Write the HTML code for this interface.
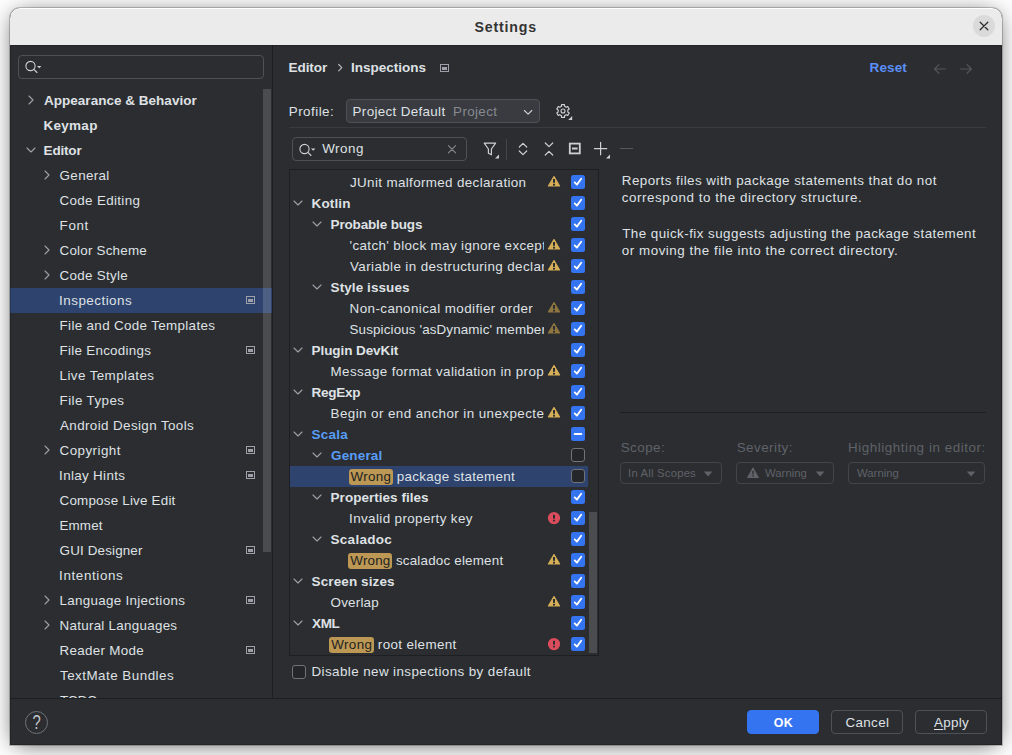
<!DOCTYPE html>
<html><head><meta charset="utf-8"><title>Settings</title>
<style>
html,body{margin:0;padding:0;width:1012px;height:755px;overflow:hidden;background:#fefefe;}
body{font-family:"Liberation Sans",sans-serif;font-size:13.4px;letter-spacing:0.3px;color:#dfe1e5;position:relative;}
.win{position:absolute;left:10px;top:8px;width:992px;height:737px;background:#2b2d30;border-radius:10px 10px 0 0;overflow:hidden;}
.shadow{position:absolute;left:10px;top:8px;width:992px;height:737px;border-radius:10px 10px 0 0;box-shadow:0 0 0 1px rgba(0,0,0,0.2),0 2.8px 23.4px -5.1px rgba(0,0,0,0.73);}
.title{position:absolute;left:0;top:0;width:992px;height:37px;background:#ebebeb;box-shadow:inset 0 1px 0 #fff;border-radius:10px 10px 0 0;}
#title{position:absolute;left:465px;top:1px;line-height:37px;color:#343434;font-weight:bold;font-size:14.2px;letter-spacing:0.45px;white-space:nowrap;}
.close{position:absolute;left:963px;top:7px;width:22px;height:22px;border-radius:50%;background:#dadada;}
.body{position:absolute;left:0;top:37px;width:992px;height:700px;}
.edge{position:absolute;left:0;top:37px;width:992px;height:700px;box-shadow:inset 0 0 0 1px rgba(0,0,0,0.2);pointer-events:none;}
.ic{position:absolute;display:block;overflow:visible;}
.b{font-weight:bold;letter-spacing:0.1px;font-size:13.5px;}
.sbt{position:absolute;height:25px;line-height:26px;white-space:nowrap;}
.sbsel{position:absolute;left:0;width:262px;height:25px;background:#2e436e;}
.trt{position:absolute;height:21px;line-height:21px;white-space:nowrap;overflow:hidden;padding-left:4px;}
.trsel{position:absolute;left:0;width:298px;height:21px;background:#2e436e;}
.blue{color:#589df6;}
.hl{background:#bd9854;color:#1e1f22;border-radius:3px;padding:0 1.5px 1px 1.8px;margin:0 0 0 -1.8px;}
.abs{position:absolute;white-space:nowrap;line-height:22px;}
.box{position:absolute;box-sizing:border-box;border:1px solid #4e5157;border-radius:4px;}
.dis{color:#5f6269;}
.sm{font-size:11.3px;letter-spacing:0.2px;}
.btn{position:absolute;box-sizing:border-box;height:24px;top:665px;border:1px solid #4e5157;border-radius:4px;}
.desc{position:absolute;white-space:nowrap;line-height:17px;left:612px;}
#h_editor{letter-spacing:-0.07px;margin-left:-0.45px}
#h_insp{letter-spacing:0.01px}
#h_reset{letter-spacing:0.13px;margin-left:-0.48px}
#p_label{letter-spacing:0.47px;margin-left:-0.25px}
#p_def{letter-spacing:0.34px;margin-left:-0.45px}
#p_proj{letter-spacing:0.36px;margin-left:-0.90px}
#s_wrong{letter-spacing:0.53px;margin-left:0.15px}
#d1{letter-spacing:0.46px;margin-left:-0.25px}
#d2{letter-spacing:0.57px;margin-left:-0.25px}
#d3{letter-spacing:0.45px;margin-left:0.15px}
#d4{letter-spacing:0.53px;margin-left:-0.25px}
#l_scope{letter-spacing:0.46px;margin-left:-0.32px}
#l_sev{letter-spacing:0.46px;margin-left:-0.32px}
#l_hl{letter-spacing:0.55px;margin-left:-0.96px}
#c_scope{letter-spacing:0.20px;margin-left:-0.96px}
#c_sev{letter-spacing:0.02px;margin-left:0.06px}
#c_hl{letter-spacing:0.02px;margin-left:0.06px}
#b_cancel{letter-spacing:0.33px;margin-left:-0.45px}
#b_apply{letter-spacing:0.30px}
#title{letter-spacing:0.79px;margin-left:-0.43px}
#dis{letter-spacing:0.41px;margin-left:-0.49px}
#sb0{letter-spacing:0.02px}
#sb1{letter-spacing:0.26px;margin-left:-0.45px}
#sb2{letter-spacing:-0.18px;margin-left:-0.45px}
#sb3{letter-spacing:0.35px;margin-left:-0.45px}
#sb4{letter-spacing:0.33px;margin-left:-0.45px}
#sb5{letter-spacing:0.65px;margin-left:-0.45px}
#sb6{letter-spacing:0.21px;margin-left:-0.45px}
#sb7{letter-spacing:0.28px;margin-left:-0.45px}
#sb8{letter-spacing:0.48px;margin-left:-0.90px}
#sb9{letter-spacing:0.34px;margin-left:-0.45px}
#sb10{letter-spacing:0.27px;margin-left:-0.45px}
#sb11{letter-spacing:0.41px;margin-left:-0.45px}
#sb12{letter-spacing:0.40px;margin-left:-0.45px}
#sb13{letter-spacing:0.39px}
#sb14{letter-spacing:0.45px;margin-left:-0.45px}
#sb15{letter-spacing:0.33px;margin-left:-0.90px}
#sb16{letter-spacing:0.21px;margin-left:-0.45px}
#sb17{letter-spacing:0.11px;margin-left:-0.45px}
#sb18{letter-spacing:0.16px;margin-left:-0.45px}
#sb19{letter-spacing:0.62px;margin-left:-0.90px}
#sb20{letter-spacing:0.30px;margin-left:-0.45px}
#sb21{letter-spacing:0.27px;margin-left:-0.45px}
#sb22{letter-spacing:0.31px;margin-left:-0.45px}
#sb23{letter-spacing:0.48px}
#sb24{letter-spacing:-0.30px}
#tr0{letter-spacing:0.36px}
#tr1{letter-spacing:0.14px;margin-left:-0.45px}
#tr2{letter-spacing:-0.16px;margin-left:-0.45px}
#tr5{letter-spacing:0.08px;margin-left:-0.45px}
#tr6{letter-spacing:0.42px;margin-left:-0.45px}
#tr8{letter-spacing:-0.08px;margin-left:-0.45px}
#tr10{letter-spacing:-0.28px;margin-left:-0.45px}
#tr12{letter-spacing:0.21px;margin-left:-0.45px}
#tr13{letter-spacing:0.17px}
#tr14{letter-spacing:0.30px;margin-left:0.44px}
#tr15{letter-spacing:0.03px;margin-left:-0.45px}
#tr16{letter-spacing:0.38px;margin-left:-0.90px}
#tr17{letter-spacing:0.27px;margin-left:-0.45px}
#tr18{letter-spacing:0.20px;margin-left:0.29px}
#tr19{letter-spacing:0.11px;margin-left:-0.45px}
#tr20{letter-spacing:0.20px;margin-left:-0.45px}
#tr21{letter-spacing:-0.33px}
#tr22{letter-spacing:0.36px;margin-left:0.29px}
#h_ins{letter-spacing:3.38px;margin-left:-14.78px}
#tr3{letter-spacing:0.37px;margin-left:-0.45px}
#tr4{letter-spacing:0.39px}
#tr7{letter-spacing:0.13px;margin-left:-0.45px}
#tr9{letter-spacing:0.38px;margin-left:-0.45px}
#tr11{letter-spacing:0.42px;margin-left:-0.45px}
#b_ok{letter-spacing:0.40px;margin-left:-0.25px}
</style></head>
<body>
<div class="shadow"></div>
<div class="win">
 <div class="title"></div>
 <div id="title">Settings</div>
 <div class="close"><svg class="ic" style="left:5px;top:5px" width="12" height="12" viewBox="0 0 12 12"><path d="M2.2 2.2 L9.8 9.8 M9.8 2.2 L2.2 9.8" stroke="#2e2e2e" stroke-width="1.3" stroke-linecap="round" fill="none"/></svg></div>
 <div class="body">
  <!-- sidebar -->
  <div style="position:absolute;left:0;top:0;width:262px;height:653px;overflow:hidden;">
   <div class="box" style="left:8px;top:10px;width:246px;height:24px;"></div>
   <svg class="ic" style="left:13.5px;top:14px" width="20" height="16" viewBox="0 0 20 16"><circle cx="6.5" cy="7" r="4.6" fill="none" stroke="#ced0d6" stroke-width="1.1"/><path d="M9.9 10.4 L13 13.5" stroke="#ced0d6" stroke-width="1.1" stroke-linecap="round"/><path d="M13 7 H17.4 L15.2 9.3 Z" fill="#ced0d6"/></svg>
<svg class="ic" style="left:12.5px;top:47px" width="16" height="16" viewBox="0 0 16 16"><path d="M6 4 L10 8 L6 12" fill="none" stroke="#9da0a8" stroke-width="1.1" stroke-linecap="round" stroke-linejoin="round"/></svg>
<div id="sb0" class="sbt b" style="left:34px;top:43px">Appearance &amp; Behavior</div>
<div id="sb1" class="sbt b" style="left:34px;top:68px">Keymap</div>
<svg class="ic" style="left:13.2px;top:97px" width="16" height="16" viewBox="0 0 16 16"><path d="M4 6 L8 10 L12 6" fill="none" stroke="#9da0a8" stroke-width="1.1" stroke-linecap="round" stroke-linejoin="round"/></svg>
<div id="sb2" class="sbt b" style="left:34px;top:93px">Editor</div>
<svg class="ic" style="left:28.5px;top:122px" width="16" height="16" viewBox="0 0 16 16"><path d="M6 4 L10 8 L6 12" fill="none" stroke="#9da0a8" stroke-width="1.1" stroke-linecap="round" stroke-linejoin="round"/></svg>
<div id="sb3" class="sbt" style="left:50px;top:118px">General</div>
<div id="sb4" class="sbt" style="left:50px;top:143px">Code Editing</div>
<div id="sb5" class="sbt" style="left:50px;top:168px">Font</div>
<svg class="ic" style="left:28.5px;top:197px" width="16" height="16" viewBox="0 0 16 16"><path d="M6 4 L10 8 L6 12" fill="none" stroke="#9da0a8" stroke-width="1.1" stroke-linecap="round" stroke-linejoin="round"/></svg>
<div id="sb6" class="sbt" style="left:50px;top:193px">Color Scheme</div>
<svg class="ic" style="left:28.5px;top:222px" width="16" height="16" viewBox="0 0 16 16"><path d="M6 4 L10 8 L6 12" fill="none" stroke="#9da0a8" stroke-width="1.1" stroke-linecap="round" stroke-linejoin="round"/></svg>
<div id="sb7" class="sbt" style="left:50px;top:218px">Code Style</div>
<div class="sbsel" style="top:243px"></div>
<div id="sb8" class="sbt" style="left:50px;top:243px">Inspections</div>
<svg class="ic" style="left:236px;top:251px" width="9" height="8" viewBox="0 0 9 8"><rect x="0.5" y="0.5" width="8" height="7" fill="none" stroke="#9da0a8" stroke-width="1"/><rect x="2" y="3" width="5" height="3" fill="#9da0a8"/></svg>
<div id="sb9" class="sbt" style="left:50px;top:268px">File and Code Templates</div>
<div id="sb10" class="sbt" style="left:50px;top:293px">File Encodings</div>
<svg class="ic" style="left:236px;top:301px" width="9" height="8" viewBox="0 0 9 8"><rect x="0.5" y="0.5" width="8" height="7" fill="none" stroke="#9da0a8" stroke-width="1"/><rect x="2" y="3" width="5" height="3" fill="#9da0a8"/></svg>
<div id="sb11" class="sbt" style="left:50px;top:318px">Live Templates</div>
<div id="sb12" class="sbt" style="left:50px;top:343px">File Types</div>
<div id="sb13" class="sbt" style="left:50px;top:368px">Android Design Tools</div>
<svg class="ic" style="left:28.5px;top:397px" width="16" height="16" viewBox="0 0 16 16"><path d="M6 4 L10 8 L6 12" fill="none" stroke="#9da0a8" stroke-width="1.1" stroke-linecap="round" stroke-linejoin="round"/></svg>
<div id="sb14" class="sbt" style="left:50px;top:393px">Copyright</div>
<svg class="ic" style="left:236px;top:401px" width="9" height="8" viewBox="0 0 9 8"><rect x="0.5" y="0.5" width="8" height="7" fill="none" stroke="#9da0a8" stroke-width="1"/><rect x="2" y="3" width="5" height="3" fill="#9da0a8"/></svg>
<div id="sb15" class="sbt" style="left:50px;top:418px">Inlay Hints</div>
<svg class="ic" style="left:236px;top:426px" width="9" height="8" viewBox="0 0 9 8"><rect x="0.5" y="0.5" width="8" height="7" fill="none" stroke="#9da0a8" stroke-width="1"/><rect x="2" y="3" width="5" height="3" fill="#9da0a8"/></svg>
<div id="sb16" class="sbt" style="left:50px;top:443px">Compose Live Edit</div>
<div id="sb17" class="sbt" style="left:50px;top:468px">Emmet</div>
<div id="sb18" class="sbt" style="left:50px;top:493px">GUI Designer</div>
<svg class="ic" style="left:236px;top:501px" width="9" height="8" viewBox="0 0 9 8"><rect x="0.5" y="0.5" width="8" height="7" fill="none" stroke="#9da0a8" stroke-width="1"/><rect x="2" y="3" width="5" height="3" fill="#9da0a8"/></svg>
<div id="sb19" class="sbt" style="left:50px;top:518px">Intentions</div>
<svg class="ic" style="left:28.5px;top:547px" width="16" height="16" viewBox="0 0 16 16"><path d="M6 4 L10 8 L6 12" fill="none" stroke="#9da0a8" stroke-width="1.1" stroke-linecap="round" stroke-linejoin="round"/></svg>
<div id="sb20" class="sbt" style="left:50px;top:543px">Language Injections</div>
<svg class="ic" style="left:236px;top:551px" width="9" height="8" viewBox="0 0 9 8"><rect x="0.5" y="0.5" width="8" height="7" fill="none" stroke="#9da0a8" stroke-width="1"/><rect x="2" y="3" width="5" height="3" fill="#9da0a8"/></svg>
<svg class="ic" style="left:28.5px;top:572px" width="16" height="16" viewBox="0 0 16 16"><path d="M6 4 L10 8 L6 12" fill="none" stroke="#9da0a8" stroke-width="1.1" stroke-linecap="round" stroke-linejoin="round"/></svg>
<div id="sb21" class="sbt" style="left:50px;top:568px">Natural Languages</div>
<div id="sb22" class="sbt" style="left:50px;top:593px">Reader Mode</div>
<svg class="ic" style="left:236px;top:601px" width="9" height="8" viewBox="0 0 9 8"><rect x="0.5" y="0.5" width="8" height="7" fill="none" stroke="#9da0a8" stroke-width="1"/><rect x="2" y="3" width="5" height="3" fill="#9da0a8"/></svg>
<div id="sb23" class="sbt" style="left:50px;top:618px">TextMate Bundles</div>
<div id="sb24" class="sbt" style="left:50px;top:643px">TODO</div>
   <div style="position:absolute;left:253px;top:44px;width:8px;height:463px;background:rgba(255,255,255,0.15);"></div>
  </div>
  <div style="position:absolute;left:262px;top:0;width:1px;height:653px;background:#1e1f22;"></div>

  <!-- header -->
  <div id="h_editor" class="abs b" style="left:279px;top:12px;">Editor</div>
  <svg class="ic" style="left:322.4px;top:15px" width="16" height="16" viewBox="0 0 16 16"><path d="M6.7 4.5 L9.8 7.7 L6.7 10.9" fill="none" stroke="#b4b7be" stroke-width="1.2" stroke-linecap="round" stroke-linejoin="round"/></svg>
  <div id="h_insp" class="abs b" style="left:341px;top:12px;">Inspections</div>
  <svg class="ic" style="left:430px;top:19px" width="9" height="8" viewBox="0 0 9 8"><rect x="0.5" y="0.5" width="8" height="7" fill="none" stroke="#9da0a8" stroke-width="1"/><rect x="2" y="3" width="5" height="3" fill="#9da0a8"/></svg>
  <div id="h_reset" class="abs b" style="left:860px;top:12px;color:#5b8ff7;">Reset</div>
  <svg class="ic" style="left:923px;top:18px" width="14" height="12" viewBox="0 0 14 12"><path d="M12.5 6 H1.8 M6 1.6 L1.6 6 L6 10.4" fill="none" stroke="#53565c" stroke-width="1.2" stroke-linecap="round" stroke-linejoin="round"/></svg>
  <svg class="ic" style="left:949px;top:18px" width="14" height="12" viewBox="0 0 14 12"><path d="M1.5 6 H12.2 M8 1.6 L12.4 6 L8 10.4" fill="none" stroke="#53565c" stroke-width="1.2" stroke-linecap="round" stroke-linejoin="round"/></svg>

  <!-- profile -->
  <div id="p_label" class="abs" style="left:279px;top:56px;">Profile:</div>
  <div class="box" style="left:336px;top:54px;width:194px;height:24px;background:#393b40;"></div>
  <div id="p_def" class="abs" style="left:343px;top:56px;">Project Default</div>
  <div id="p_proj" class="abs" style="left:444px;top:56px;color:#868a91;">Project</div>
  <svg class="ic" style="left:510px;top:59px" width="16" height="16" viewBox="0 0 16 16"><path d="M4.4 6.5 L8.1 10.1 L11.8 6.5" fill="none" stroke="#ced0d6" stroke-width="1.1" stroke-linecap="round" stroke-linejoin="round"/></svg>
  <svg class="ic" style="left:545px;top:58.1px" width="20" height="20" viewBox="0 0 20 20"><path d="M9.46 1.67 L6.54 1.67 L6.40 3.37 L4.79 4.30 L3.25 3.57 L1.78 6.10 L3.19 7.07 L3.19 8.93 L1.78 9.90 L3.25 12.43 L4.79 11.70 L6.40 12.63 L6.54 14.33 L9.46 14.33 L9.60 12.63 L11.21 11.70 L12.75 12.43 L14.22 9.90 L12.81 8.93 L12.81 7.07 L14.22 6.10 L12.75 3.57 L11.21 4.30 L9.60 3.37 Z" fill="none" stroke="#ced0d6" stroke-width="1.15" stroke-linejoin="round"/><circle cx="8" cy="8" r="2" fill="none" stroke="#ced0d6" stroke-width="1.1"/><path d="M17.2 13 V17 H13.2 Z" fill="#ced0d6"/></svg>
  <div style="position:absolute;left:279px;top:82px;width:697px;height:1px;background:#393b40;"></div>

  <!-- toolbar -->
  <div class="box" style="left:282px;top:92px;width:175px;height:24px;"></div>
  <svg class="ic" style="left:288px;top:97px" width="20" height="16" viewBox="0 0 20 16"><circle cx="6.5" cy="7" r="4.6" fill="none" stroke="#ced0d6" stroke-width="1.1"/><path d="M9.9 10.4 L13 13.5" stroke="#ced0d6" stroke-width="1.1" stroke-linecap="round"/><path d="M13 6.4 H17.4 L15.2 8.7 Z" fill="#ced0d6"/></svg>
  <div id="s_wrong" class="abs" style="left:312px;top:93px;">Wrong</div>
  <svg class="ic" style="left:437px;top:99px" width="10" height="10" viewBox="0 0 10 10"><path d="M1.4 1.6 L8.6 8.8 M8.6 1.6 L1.4 8.8" stroke="#868a91" stroke-width="1.1" stroke-linecap="round"/></svg>
  <!-- filter -->
  <svg class="ic" style="left:472px;top:96px" width="18" height="18" viewBox="0 0 18 18"><path d="M2.2 2.2 H13.6 L9.4 8 V13.8 L6.4 12.2 V8 Z" fill="none" stroke="#ced0d6" stroke-width="1.2" stroke-linejoin="round"/><path d="M17 13.5 V17.5 H13 Z" fill="#ced0d6"/></svg>
  <div style="position:absolute;left:496px;top:94px;width:1px;height:21px;background:#43454a;"></div>
  <!-- expand -->
  <svg class="ic" style="left:505px;top:96px" width="16" height="16" viewBox="0 0 16 16"><path d="M4.3 6 L8 2.4 L11.7 6 M4.3 10 L8 13.6 L11.7 10" fill="none" stroke="#ced0d6" stroke-width="1.2" stroke-linecap="round" stroke-linejoin="round"/></svg>
  <!-- collapse -->
  <svg class="ic" style="left:531px;top:96px" width="16" height="16" viewBox="0 0 16 16"><path d="M4.3 2 L8 5.6 L11.7 2 M4.3 14 L8 10.4 L11.7 14" fill="none" stroke="#ced0d6" stroke-width="1.2" stroke-linecap="round" stroke-linejoin="round"/></svg>
  <!-- square minus -->
  <svg class="ic" style="left:558px;top:97px" width="14" height="14" viewBox="0 0 14 14"><rect x="1.8" y="1.6" width="10" height="9.8" fill="none" stroke="#ced0d6" stroke-width="1.8"/><path d="M4 6.5 H9.6" stroke="#ced0d6" stroke-width="1.9"/></svg>
  <!-- plus -->
  <svg class="ic" style="left:583px;top:96px" width="18" height="18" viewBox="0 0 18 18"><path d="M7.6 1.4 V13.8 M1.4 7.6 H13.8" stroke="#ced0d6" stroke-width="1.2" stroke-linecap="round"/><path d="M17 13.5 V17.5 H13 Z" fill="#ced0d6"/></svg>
  <div style="position:absolute;left:610px;top:103px;width:13px;height:1px;background:#55585e;"></div>

  <!-- tree -->
  <div style="position:absolute;left:279px;top:124px;width:308px;height:485px;border:1px solid #1e1f22;overflow:hidden;">
<div id="tr0" class="trt" style="left:56px;top:2px;width:194px">JUnit malformed declaration</div>
<svg class="ic" style="left:257px;top:5px" width="14" height="13" viewBox="0 0 14 13"><path d="M7 1.6 L12.6 11 H1.4 Z" fill="#d6ae58" stroke="#d6ae58" stroke-width="1.2" stroke-linejoin="round"/><rect x="6" y="4" width="2" height="3.8" fill="#2b2d30"/><rect x="6" y="8.8" width="2" height="1.8" fill="#2b2d30"/></svg>
<svg class="ic" style="left:281px;top:5px" width="14" height="14" viewBox="0 0 14 14"><rect width="14" height="14" rx="2.5" fill="#3574f0"/><path d="M3.7 7.4 L5.9 9.6 L10.2 3.7" fill="none" stroke="#fff" stroke-width="1.8" stroke-linecap="round" stroke-linejoin="round"/></svg>
<svg class="ic" style="left:0px;top:25.0px" width="16" height="16" viewBox="0 0 16 16"><path d="M4 6 L8 10 L12 6" fill="none" stroke="#9da0a8" stroke-width="1.1" stroke-linecap="round" stroke-linejoin="round"/></svg>
<div id="tr1" class="trt b" style="left:18px;top:23px;width:232px">Kotlin</div>
<svg class="ic" style="left:281px;top:26px" width="14" height="14" viewBox="0 0 14 14"><rect width="14" height="14" rx="2.5" fill="#3574f0"/><path d="M3.7 7.4 L5.9 9.6 L10.2 3.7" fill="none" stroke="#fff" stroke-width="1.8" stroke-linecap="round" stroke-linejoin="round"/></svg>
<svg class="ic" style="left:19px;top:46.0px" width="16" height="16" viewBox="0 0 16 16"><path d="M4 6 L8 10 L12 6" fill="none" stroke="#9da0a8" stroke-width="1.1" stroke-linecap="round" stroke-linejoin="round"/></svg>
<div id="tr2" class="trt b" style="left:37px;top:44px;width:213px">Probable bugs</div>
<svg class="ic" style="left:281px;top:47px" width="14" height="14" viewBox="0 0 14 14"><rect width="14" height="14" rx="2.5" fill="#3574f0"/><path d="M3.7 7.4 L5.9 9.6 L10.2 3.7" fill="none" stroke="#fff" stroke-width="1.8" stroke-linecap="round" stroke-linejoin="round"/></svg>
<div id="tr3" class="trt" style="left:56px;top:65px;width:194px"><span id="tr3p">&#x27;catch&#x27; block may ignore excep</span>tion</div>
<svg class="ic" style="left:257px;top:68px" width="14" height="13" viewBox="0 0 14 13"><path d="M7 1.6 L12.6 11 H1.4 Z" fill="#d6ae58" stroke="#d6ae58" stroke-width="1.2" stroke-linejoin="round"/><rect x="6" y="4" width="2" height="3.8" fill="#2b2d30"/><rect x="6" y="8.8" width="2" height="1.8" fill="#2b2d30"/></svg>
<svg class="ic" style="left:281px;top:68px" width="14" height="14" viewBox="0 0 14 14"><rect width="14" height="14" rx="2.5" fill="#3574f0"/><path d="M3.7 7.4 L5.9 9.6 L10.2 3.7" fill="none" stroke="#fff" stroke-width="1.8" stroke-linecap="round" stroke-linejoin="round"/></svg>
<div id="tr4" class="trt" style="left:56px;top:86px;width:194px"><span id="tr4p">Variable in destructuring decla</span>ration uses name of a wrong data class property</div>
<svg class="ic" style="left:257px;top:89px" width="14" height="13" viewBox="0 0 14 13"><path d="M7 1.6 L12.6 11 H1.4 Z" fill="#d6ae58" stroke="#d6ae58" stroke-width="1.2" stroke-linejoin="round"/><rect x="6" y="4" width="2" height="3.8" fill="#2b2d30"/><rect x="6" y="8.8" width="2" height="1.8" fill="#2b2d30"/></svg>
<svg class="ic" style="left:281px;top:89px" width="14" height="14" viewBox="0 0 14 14"><rect width="14" height="14" rx="2.5" fill="#3574f0"/><path d="M3.7 7.4 L5.9 9.6 L10.2 3.7" fill="none" stroke="#fff" stroke-width="1.8" stroke-linecap="round" stroke-linejoin="round"/></svg>
<svg class="ic" style="left:19px;top:109.0px" width="16" height="16" viewBox="0 0 16 16"><path d="M4 6 L8 10 L12 6" fill="none" stroke="#9da0a8" stroke-width="1.1" stroke-linecap="round" stroke-linejoin="round"/></svg>
<div id="tr5" class="trt b" style="left:37px;top:107px;width:213px">Style issues</div>
<svg class="ic" style="left:281px;top:110px" width="14" height="14" viewBox="0 0 14 14"><rect width="14" height="14" rx="2.5" fill="#3574f0"/><path d="M3.7 7.4 L5.9 9.6 L10.2 3.7" fill="none" stroke="#fff" stroke-width="1.8" stroke-linecap="round" stroke-linejoin="round"/></svg>
<div id="tr6" class="trt" style="left:56px;top:128px;width:194px">Non-canonical modifier order</div>
<svg class="ic" style="left:257px;top:131px" width="14" height="13" viewBox="0 0 14 13"><path d="M7 1.6 L12.6 11 H1.4 Z" fill="#8f7740" stroke="#8f7740" stroke-width="1.2" stroke-linejoin="round"/><rect x="6" y="4" width="2" height="3.8" fill="#2b2d30"/><rect x="6" y="8.8" width="2" height="1.8" fill="#2b2d30"/></svg>
<svg class="ic" style="left:281px;top:131px" width="14" height="14" viewBox="0 0 14 14"><rect width="14" height="14" rx="2.5" fill="#3574f0"/><path d="M3.7 7.4 L5.9 9.6 L10.2 3.7" fill="none" stroke="#fff" stroke-width="1.8" stroke-linecap="round" stroke-linejoin="round"/></svg>
<div id="tr7" class="trt" style="left:56px;top:149px;width:194px"><span id="tr7p">Suspicious &#x27;asDynamic&#x27; membe</span>r invocation</div>
<svg class="ic" style="left:257px;top:152px" width="14" height="13" viewBox="0 0 14 13"><path d="M7 1.6 L12.6 11 H1.4 Z" fill="#8f7740" stroke="#8f7740" stroke-width="1.2" stroke-linejoin="round"/><rect x="6" y="4" width="2" height="3.8" fill="#2b2d30"/><rect x="6" y="8.8" width="2" height="1.8" fill="#2b2d30"/></svg>
<svg class="ic" style="left:281px;top:152px" width="14" height="14" viewBox="0 0 14 14"><rect width="14" height="14" rx="2.5" fill="#3574f0"/><path d="M3.7 7.4 L5.9 9.6 L10.2 3.7" fill="none" stroke="#fff" stroke-width="1.8" stroke-linecap="round" stroke-linejoin="round"/></svg>
<svg class="ic" style="left:0px;top:172.0px" width="16" height="16" viewBox="0 0 16 16"><path d="M4 6 L8 10 L12 6" fill="none" stroke="#9da0a8" stroke-width="1.1" stroke-linecap="round" stroke-linejoin="round"/></svg>
<div id="tr8" class="trt b" style="left:18px;top:170px;width:232px">Plugin DevKit</div>
<svg class="ic" style="left:281px;top:173px" width="14" height="14" viewBox="0 0 14 14"><rect width="14" height="14" rx="2.5" fill="#3574f0"/><path d="M3.7 7.4 L5.9 9.6 L10.2 3.7" fill="none" stroke="#fff" stroke-width="1.8" stroke-linecap="round" stroke-linejoin="round"/></svg>
<div id="tr9" class="trt" style="left:37px;top:191px;width:213px"><span id="tr9p">Message format validation in prop</span>erties files</div>
<svg class="ic" style="left:257px;top:194px" width="14" height="13" viewBox="0 0 14 13"><path d="M7 1.6 L12.6 11 H1.4 Z" fill="#d6ae58" stroke="#d6ae58" stroke-width="1.2" stroke-linejoin="round"/><rect x="6" y="4" width="2" height="3.8" fill="#2b2d30"/><rect x="6" y="8.8" width="2" height="1.8" fill="#2b2d30"/></svg>
<svg class="ic" style="left:281px;top:194px" width="14" height="14" viewBox="0 0 14 14"><rect width="14" height="14" rx="2.5" fill="#3574f0"/><path d="M3.7 7.4 L5.9 9.6 L10.2 3.7" fill="none" stroke="#fff" stroke-width="1.8" stroke-linecap="round" stroke-linejoin="round"/></svg>
<svg class="ic" style="left:0px;top:214.0px" width="16" height="16" viewBox="0 0 16 16"><path d="M4 6 L8 10 L12 6" fill="none" stroke="#9da0a8" stroke-width="1.1" stroke-linecap="round" stroke-linejoin="round"/></svg>
<div id="tr10" class="trt b" style="left:18px;top:212px;width:232px">RegExp</div>
<svg class="ic" style="left:281px;top:215px" width="14" height="14" viewBox="0 0 14 14"><rect width="14" height="14" rx="2.5" fill="#3574f0"/><path d="M3.7 7.4 L5.9 9.6 L10.2 3.7" fill="none" stroke="#fff" stroke-width="1.8" stroke-linecap="round" stroke-linejoin="round"/></svg>
<div id="tr11" class="trt" style="left:37px;top:233px;width:213px"><span id="tr11p">Begin or end anchor in unexpecte</span>d position</div>
<svg class="ic" style="left:257px;top:236px" width="14" height="13" viewBox="0 0 14 13"><path d="M7 1.6 L12.6 11 H1.4 Z" fill="#d6ae58" stroke="#d6ae58" stroke-width="1.2" stroke-linejoin="round"/><rect x="6" y="4" width="2" height="3.8" fill="#2b2d30"/><rect x="6" y="8.8" width="2" height="1.8" fill="#2b2d30"/></svg>
<svg class="ic" style="left:281px;top:236px" width="14" height="14" viewBox="0 0 14 14"><rect width="14" height="14" rx="2.5" fill="#3574f0"/><path d="M3.7 7.4 L5.9 9.6 L10.2 3.7" fill="none" stroke="#fff" stroke-width="1.8" stroke-linecap="round" stroke-linejoin="round"/></svg>
<svg class="ic" style="left:0px;top:256.0px" width="16" height="16" viewBox="0 0 16 16"><path d="M4 6 L8 10 L12 6" fill="none" stroke="#9da0a8" stroke-width="1.1" stroke-linecap="round" stroke-linejoin="round"/></svg>
<div id="tr12" class="trt b blue" style="left:18px;top:254px;width:232px">Scala</div>
<svg class="ic" style="left:281px;top:257px" width="14" height="14" viewBox="0 0 14 14"><rect width="14" height="14" rx="2.5" fill="#3574f0"/><path d="M3.6 7 H10.4" fill="none" stroke="#fff" stroke-width="1.8" stroke-linecap="round"/></svg>
<svg class="ic" style="left:19px;top:277.0px" width="16" height="16" viewBox="0 0 16 16"><path d="M4 6 L8 10 L12 6" fill="none" stroke="#9da0a8" stroke-width="1.1" stroke-linecap="round" stroke-linejoin="round"/></svg>
<div id="tr13" class="trt b blue" style="left:37px;top:275px;width:213px">General</div>
<svg class="ic" style="left:281px;top:278px" width="14" height="14" viewBox="0 0 14 14"><rect x="0.5" y="0.5" width="13" height="13" rx="2.5" fill="#25262a" stroke="#6f737a"/></svg>
<div class="trsel" style="top:296px"></div>
<div id="tr14" class="trt" style="left:56px;top:296px;width:194px"><span class="hl">Wrong</span> package statement</div>
<svg class="ic" style="left:281px;top:299px" width="14" height="14" viewBox="0 0 14 14"><rect x="0.5" y="0.5" width="13" height="13" rx="2.5" fill="#25262a" stroke="#6f737a"/></svg>
<svg class="ic" style="left:19px;top:319.0px" width="16" height="16" viewBox="0 0 16 16"><path d="M4 6 L8 10 L12 6" fill="none" stroke="#9da0a8" stroke-width="1.1" stroke-linecap="round" stroke-linejoin="round"/></svg>
<div id="tr15" class="trt b" style="left:37px;top:317px;width:213px">Properties files</div>
<svg class="ic" style="left:281px;top:320px" width="14" height="14" viewBox="0 0 14 14"><rect width="14" height="14" rx="2.5" fill="#3574f0"/><path d="M3.7 7.4 L5.9 9.6 L10.2 3.7" fill="none" stroke="#fff" stroke-width="1.8" stroke-linecap="round" stroke-linejoin="round"/></svg>
<div id="tr16" class="trt" style="left:56px;top:338px;width:194px">Invalid property key</div>
<svg class="ic" style="left:257px;top:341px" width="14" height="14" viewBox="0 0 14 14"><circle cx="7" cy="7.1" r="6.15" fill="#db4d5d"/><rect x="6" y="3.8" width="2" height="3.8" fill="#2b2d30"/><rect x="6" y="8.8" width="2" height="1.6" fill="#2b2d30"/></svg>
<svg class="ic" style="left:281px;top:341px" width="14" height="14" viewBox="0 0 14 14"><rect width="14" height="14" rx="2.5" fill="#3574f0"/><path d="M3.7 7.4 L5.9 9.6 L10.2 3.7" fill="none" stroke="#fff" stroke-width="1.8" stroke-linecap="round" stroke-linejoin="round"/></svg>
<svg class="ic" style="left:19px;top:361.0px" width="16" height="16" viewBox="0 0 16 16"><path d="M4 6 L8 10 L12 6" fill="none" stroke="#9da0a8" stroke-width="1.1" stroke-linecap="round" stroke-linejoin="round"/></svg>
<div id="tr17" class="trt b" style="left:37px;top:359px;width:213px">Scaladoc</div>
<svg class="ic" style="left:281px;top:362px" width="14" height="14" viewBox="0 0 14 14"><rect width="14" height="14" rx="2.5" fill="#3574f0"/><path d="M3.7 7.4 L5.9 9.6 L10.2 3.7" fill="none" stroke="#fff" stroke-width="1.8" stroke-linecap="round" stroke-linejoin="round"/></svg>
<div id="tr18" class="trt" style="left:56px;top:380px;width:194px"><span class="hl">Wrong</span> scaladoc element</div>
<svg class="ic" style="left:257px;top:383px" width="14" height="13" viewBox="0 0 14 13"><path d="M7 1.6 L12.6 11 H1.4 Z" fill="#d6ae58" stroke="#d6ae58" stroke-width="1.2" stroke-linejoin="round"/><rect x="6" y="4" width="2" height="3.8" fill="#2b2d30"/><rect x="6" y="8.8" width="2" height="1.8" fill="#2b2d30"/></svg>
<svg class="ic" style="left:281px;top:383px" width="14" height="14" viewBox="0 0 14 14"><rect width="14" height="14" rx="2.5" fill="#3574f0"/><path d="M3.7 7.4 L5.9 9.6 L10.2 3.7" fill="none" stroke="#fff" stroke-width="1.8" stroke-linecap="round" stroke-linejoin="round"/></svg>
<svg class="ic" style="left:0px;top:403.0px" width="16" height="16" viewBox="0 0 16 16"><path d="M4 6 L8 10 L12 6" fill="none" stroke="#9da0a8" stroke-width="1.1" stroke-linecap="round" stroke-linejoin="round"/></svg>
<div id="tr19" class="trt b" style="left:18px;top:401px;width:232px">Screen sizes</div>
<svg class="ic" style="left:281px;top:404px" width="14" height="14" viewBox="0 0 14 14"><rect width="14" height="14" rx="2.5" fill="#3574f0"/><path d="M3.7 7.4 L5.9 9.6 L10.2 3.7" fill="none" stroke="#fff" stroke-width="1.8" stroke-linecap="round" stroke-linejoin="round"/></svg>
<div id="tr20" class="trt" style="left:37px;top:422px;width:213px">Overlap</div>
<svg class="ic" style="left:257px;top:425px" width="14" height="13" viewBox="0 0 14 13"><path d="M7 1.6 L12.6 11 H1.4 Z" fill="#d6ae58" stroke="#d6ae58" stroke-width="1.2" stroke-linejoin="round"/><rect x="6" y="4" width="2" height="3.8" fill="#2b2d30"/><rect x="6" y="8.8" width="2" height="1.8" fill="#2b2d30"/></svg>
<svg class="ic" style="left:281px;top:425px" width="14" height="14" viewBox="0 0 14 14"><rect width="14" height="14" rx="2.5" fill="#3574f0"/><path d="M3.7 7.4 L5.9 9.6 L10.2 3.7" fill="none" stroke="#fff" stroke-width="1.8" stroke-linecap="round" stroke-linejoin="round"/></svg>
<svg class="ic" style="left:0px;top:445.0px" width="16" height="16" viewBox="0 0 16 16"><path d="M4 6 L8 10 L12 6" fill="none" stroke="#9da0a8" stroke-width="1.1" stroke-linecap="round" stroke-linejoin="round"/></svg>
<div id="tr21" class="trt b" style="left:18px;top:443px;width:232px">XML</div>
<svg class="ic" style="left:281px;top:446px" width="14" height="14" viewBox="0 0 14 14"><rect width="14" height="14" rx="2.5" fill="#3574f0"/><path d="M3.7 7.4 L5.9 9.6 L10.2 3.7" fill="none" stroke="#fff" stroke-width="1.8" stroke-linecap="round" stroke-linejoin="round"/></svg>
<div id="tr22" class="trt" style="left:37px;top:464px;width:213px"><span class="hl">Wrong</span> root element</div>
<svg class="ic" style="left:257px;top:467px" width="14" height="14" viewBox="0 0 14 14"><circle cx="7" cy="7.1" r="6.15" fill="#db4d5d"/><rect x="6" y="3.8" width="2" height="3.8" fill="#2b2d30"/><rect x="6" y="8.8" width="2" height="1.6" fill="#2b2d30"/></svg>
<svg class="ic" style="left:281px;top:467px" width="14" height="14" viewBox="0 0 14 14"><rect width="14" height="14" rx="2.5" fill="#3574f0"/><path d="M3.7 7.4 L5.9 9.6 L10.2 3.7" fill="none" stroke="#fff" stroke-width="1.8" stroke-linecap="round" stroke-linejoin="round"/></svg>
   <div style="position:absolute;left:299px;top:342px;width:8px;height:141px;background:rgba(255,255,255,0.15);"></div>
  </div>
  <svg class="ic" style="left:282px;top:620px" width="14" height="14" viewBox="0 0 14 14"><rect x="0.5" y="0.5" width="13" height="13" rx="2.5" fill="#25262a" stroke="#6f737a"/></svg>
  <div id="dis" class="abs" style="left:302px;top:616px;">Disable new inspections by default</div>

  <!-- description -->
  <div id="d1" class="desc" style="top:127px;">Reports files with package statements that do not</div>
  <div id="d2" class="desc" style="top:144px;">correspond to the directory structure.</div>
  <div id="d3" class="desc" style="top:180px;">The quick-fix suggests adjusting the package statement</div>
  <div id="d4" class="desc" style="top:197px;">or moving the file into the correct directory.</div>
  <div style="position:absolute;left:610px;top:367px;width:366px;height:1px;background:#1e1f22;"></div>
  <div id="l_scope" class="abs dis" style="left:611px;top:392px;">Scope:</div>
  <div id="l_sev" class="abs dis" style="left:727px;top:392px;">Severity:</div>
  <div id="l_hl" class="abs dis" style="left:839px;top:392px;">Highlighting in editor:</div>
  <div class="box" style="left:610px;top:417px;width:102px;height:22px;border-color:#43454a;"></div>
  <div id="c_scope" class="abs dis sm" style="left:619px;top:417px;">In All Scopes</div>
  <svg class="ic" style="left:693px;top:425.5px" width="10" height="6" viewBox="0 0 10 6"><path d="M0.8 0.4 H9.4 L5.1 5.4 Z" fill="#5f6269"/></svg>
  <div class="box" style="left:726px;top:417px;width:98px;height:22px;border-color:#43454a;"></div>
  <svg class="ic" style="left:737px;top:422px" width="12" height="12" viewBox="0 0 14 14"><path d="M7 1.2 L13.2 12.2 H0.8 Z" fill="#5f6269" stroke="#5f6269" stroke-width="1.2" stroke-linejoin="round"/><rect x="6.2" y="4.6" width="1.6" height="4" fill="#2b2d30"/><rect x="6.2" y="9.6" width="1.6" height="1.6" fill="#2b2d30"/></svg>
  <div id="c_sev" class="abs dis sm" style="left:755px;top:417px;">Warning</div>
  <svg class="ic" style="left:805px;top:425.5px" width="10" height="6" viewBox="0 0 10 6"><path d="M0.8 0.4 H9.4 L5.1 5.4 Z" fill="#5f6269"/></svg>
  <div class="box" style="left:838px;top:417px;width:137px;height:22px;border-color:#43454a;"></div>
  <div id="c_hl" class="abs dis sm" style="left:847px;top:417px;">Warning</div>
  <svg class="ic" style="left:955.5px;top:425.5px" width="10" height="6" viewBox="0 0 10 6"><path d="M0.8 0.4 H9.4 L5.1 5.4 Z" fill="#5f6269"/></svg>

  <!-- bottom -->
  <div style="position:absolute;left:0;top:653px;width:992px;height:1px;background:#1e1f22;"></div>
  <div style="position:absolute;left:15px;top:666px;width:21px;height:21px;border:1px solid #6f737a;border-radius:50%;"></div>
  <div id="q" class="abs" style="left:20.7px;top:663.5px;width:11px;text-align:center;line-height:27px;color:#c3c6cc;font-size:20px;letter-spacing:0;transform:scaleX(0.74);">?</div>
  <div class="btn" style="left:737px;width:72px;background:#3574f0;border-color:#3574f0;"></div>
  <div id="b_ok" class="abs b" style="left:764px;top:667px;color:#fff;font-size:12.4px;">OK</div>
  <div class="btn" style="left:821px;width:72px;"></div>
  <div id="b_cancel" class="abs" style="left:836px;top:667px;">Cancel</div>
  <div class="btn" style="left:905px;width:72px;"></div>
  <div id="b_apply" class="abs" style="left:924px;top:667px;"><span style="text-decoration:underline;text-underline-offset:2px">A</span>pply</div>
 </div>
 <div class="edge"></div>
</div>
</body></html>
